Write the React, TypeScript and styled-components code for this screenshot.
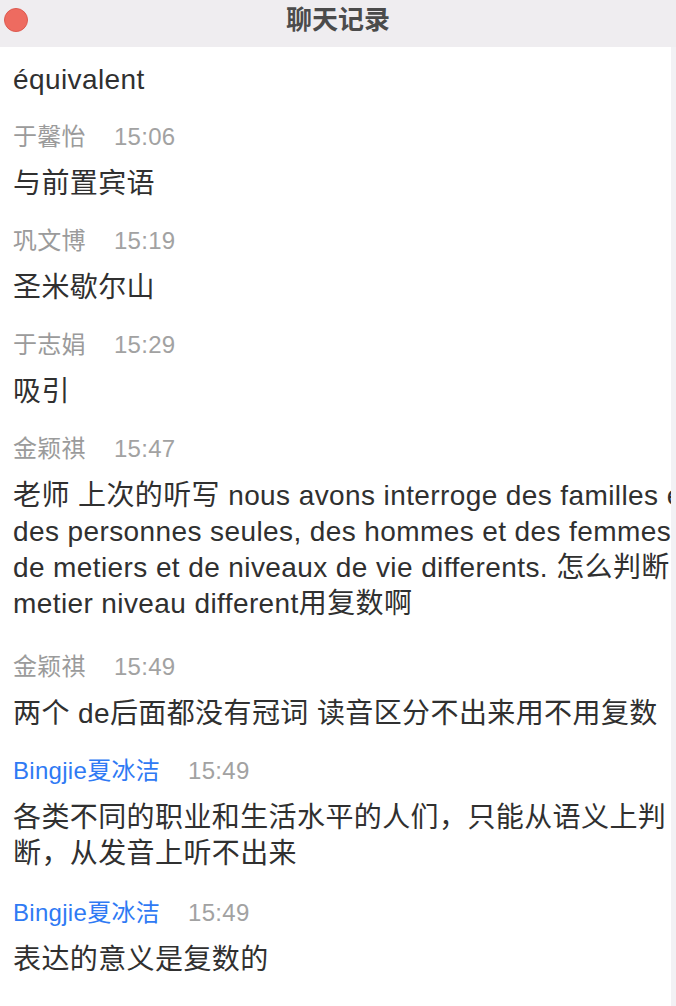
import React from "react";
import styled, { createGlobalStyle } from "styled-components";

const GlobalStyle = createGlobalStyle`
  html, body {
    margin: 0;
    padding: 0;
    background: #ffffff;
    overflow: hidden;
  }
  * { box-sizing: border-box; }
`;

const FONT = `"Liberation Sans", "Noto Sans CJK SC", sans-serif`;

const Window = styled.div`
  width: 676px;
  height: 1006px;
  display: flex;
  flex-direction: column;
  overflow: hidden;
  font-family: ${FONT};
  background: #ffffff;
`;

const TitleBar = styled.div`
  height: 47px;
  flex: 0 0 47px;
  background: #efedf0;
  display: grid;
  grid-template-columns: 1fr auto 1fr;
  align-items: center;
`;

const CloseDot = styled.span`
  display: block;
  width: 24px;
  height: 24px;
  margin: 0 0 7px 4px;
  border-radius: 50%;
  background: #ee6b60;
  border: 1px solid #dd5a50;
`;

const Title = styled.div`
  font-family: "Noto Sans CJK SC", sans-serif;
  font-size: 26px;
  font-weight: 700;
  color: #4b4b4b;
  line-height: 1;
  margin-bottom: 12px;
`;

const Body = styled.div`
  flex: 1;
  display: flex;
  min-height: 0;
`;

const Content = styled.div`
  flex: 1;
  overflow: hidden;
  display: flex;
  flex-direction: column;
  padding: 15px 0 0 13px;
`;

const Gutter = styled.div`
  flex: 0 0 5px;
  background: #f2f1f4;
`;

const Header = styled.div`
  display: flex;
  align-items: center;
  height: 34px;
  font-size: 24px;
  letter-spacing: 0.3px;
  line-height: 34px;
  margin-top: 22px;
  white-space: nowrap;
`;

const Name = styled.span<{ $blue?: boolean }>`
  color: ${(p) => (p.$blue ? "#2f7af4" : "#9b9b9b")};
`;

const Time = styled.span`
  color: #a2a2a2;
  margin-left: 28px;
`;

const Message = styled.div<{ $first?: boolean; $tail?: number }>`
  margin-top: ${(p) => (p.$first ? "0" : "12px")};
  padding-bottom: ${(p) => p.$tail ?? 0}px;
  font-size: 28px;
  letter-spacing: 0.4px;
  line-height: 36px;
  color: #303030;
  white-space: nowrap;
`;

const Line = styled.div``;

type Entry = {
  name?: string;
  time?: string;
  blue?: boolean;
  tail?: number;
  lines: string[];
};

const entries: Entry[] = [
  { lines: ["équivalent"] },
  { name: "于馨怡", time: "15:06", lines: ["与前置宾语"] },
  { name: "巩文博", time: "15:19", lines: ["圣米歇尔山"] },
  { name: "于志娟", time: "15:29", lines: ["吸引"] },
  {
    name: "金颖祺",
    time: "15:47",
    tail: 6,
    lines: [
      "老师 上次的听写 nous avons interroge des familles et",
      "des personnes seules, des hommes et des femmes",
      "de metiers et de niveaux de vie differents. 怎么判断",
      "metier niveau different用复数啊",
    ],
  },
  { name: "金颖祺", time: "15:49", lines: ["两个 de后面都没有冠词 读音区分不出来用不用复数"] },
  {
    name: "Bingjie夏冰洁",
    time: "15:49",
    blue: true,
    tail: 2,
    lines: ["各类不同的职业和生活水平的人们，只能从语义上判", "断，从发音上听不出来"],
  },
  { name: "Bingjie夏冰洁", time: "15:49", blue: true, lines: ["表达的意义是复数的"] },
];

export default function App() {
  return (
    <Window>
      <GlobalStyle />
      <TitleBar>
        <CloseDot />
        <Title>聊天记录</Title>
        <span />
      </TitleBar>
      <Body>
        <Content>
          {entries.map((e, i) => (
            <React.Fragment key={i}>
              {e.name && (
                <Header>
                  <Name $blue={e.blue}>{e.name}</Name>
                  <Time>{e.time}</Time>
                </Header>
              )}
              <Message $first={!e.name} $tail={e.tail}>
                {e.lines.map((l, j) => (
                  <Line key={j}>{l}</Line>
                ))}
              </Message>
            </React.Fragment>
          ))}
        </Content>
        <Gutter />
      </Body>
    </Window>
  );
}
